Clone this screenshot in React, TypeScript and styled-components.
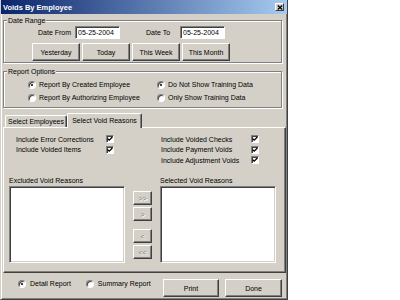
import styled, { createGlobalStyle } from "styled-components";

const GlobalStyle = createGlobalStyle`
  html, body {
    margin: 0;
    padding: 0;
    background: #ffffff;
  }
  body {
    font-family: "Liberation Sans", Arial, sans-serif;
    font-size: 7px;
    color: #000;
  }
  * {
    box-sizing: border-box;
  }
`;

function Radio({ label, checked, gap }: { label: string; checked?: boolean; gap: number }) {
  return (
    <RadioItem $gap={gap}>
      <RadioDot $checked={checked} />
      <span>{label}</span>
    </RadioItem>
  );
}

function Check({ label }: { label: string }) {
  return (
    <CheckRow>
      <span>{label}</span>
      <CheckBox>
        <svg width="6" height="6" viewBox="0 0 6 6">
          <path d="M0.6 2.6 L2.2 4.2 L5.4 1" stroke="#000" strokeWidth="1.3" fill="none" />
        </svg>
      </CheckBox>
    </CheckRow>
  );
}

export default function App() {
  return (
    <>
      <GlobalStyle />
      <Window>
        <TitleBar>
          <span>Voids By Employee</span>
          <CloseButton>
            <svg width="6" height="5" viewBox="0 0 6 5">
              <path d="M0.8 0.5 L5.2 4.5 M5.2 0.5 L0.8 4.5" stroke="#000" strokeWidth="1.3" />
            </svg>
          </CloseButton>
        </TitleBar>
        <Body>
          <Group $top={6}>
            <Legend>Date Range</Legend>
            <DateRow>
              <span>Date From</span>
              <TextBox $gap={4} readOnly value="05-25-2004" />
              <DateLabel>Date To</DateLabel>
              <TextBox $gap={10} readOnly value="05-25-2004" />
            </DateRow>
            <ButtonRow>
              <Button $w={48}>Yesterday</Button>
              <Button $w={48}>Today</Button>
              <Button $w={48}>This Week</Button>
              <Button $w={48}>This Month</Button>
            </ButtonRow>
          </Group>

          <Group $top={8}>
            <Legend>Report Options</Legend>
            <OptionGrid>
              <Radio label="Report By Created Employee" checked gap={3} />
              <Radio label="Do Not Show Training Data" checked gap={3} />
              <Radio label="Report By Authorizing Employee" gap={3} />
              <Radio label="Only Show Training Data" gap={3} />
            </OptionGrid>
          </Group>

          <TabStrip>
            <Tab $w={62}>Select Employees</Tab>
            <Tab $w={75} $active>
              Select Void Reasons
            </Tab>
          </TabStrip>
          <TabPanel>
            <CheckGrid>
              <CheckColumn>
                <Check label="Include Error Corrections" />
                <Check label="Include Voided Items" />
              </CheckColumn>
              <CheckColumn>
                <Check label="Include Voided Checks" />
                <Check label="Include Payment Voids" />
                <Check label="Include Adjustment Voids" />
              </CheckColumn>
            </CheckGrid>
            <ListsRow>
              <ListColumn>
                <ListLabel>Excluded Void Reasons</ListLabel>
                <ListBox />
              </ListColumn>
              <MoveColumn>
                <MoveButton>&gt;&gt;</MoveButton>
                <MoveButton>&gt;</MoveButton>
                <MoveButton $space={6}>&lt;</MoveButton>
                <MoveButton>&lt;&lt;</MoveButton>
              </MoveColumn>
              <ListColumn>
                <ListLabel>Selected Void Reasons</ListLabel>
                <ListBox />
              </ListColumn>
            </ListsRow>
          </TabPanel>

          <Footer>
            <Radio label="Detail Report" checked gap={4} />
            <FooterRadio>
              <Radio label="Summary Report" gap={4} />
            </FooterRadio>
            <FooterButtons>
              <Button $w={56}>Print</Button>
              <Button $w={57}>Done</Button>
            </FooterButtons>
          </Footer>
        </Body>
      </Window>
    </>
  );
}

const Window = styled.div`
  width: 288px;
  height: 300px;
  display: flex;
  flex-direction: column;
  background: #d4d0c8;
  border: 1px solid;
  border-top-width: 0;
  border-color: #d4d0c8 #404040 #404040 #d4d0c8;
  box-shadow: inset 1px 0 0 #fff, inset -1px -1px 0 #808080;
`;

const TitleBar = styled.div`
  flex: none;
  height: 14px;
  display: flex;
  align-items: center;
  justify-content: space-between;
  padding: 0 3px 0 2px;
  background: linear-gradient(to right, #0a246a, #a6caf0);
  color: #fff;
  font-weight: bold;
  font-size: 7.5px;
`;

const CloseButton = styled.span`
  width: 9px;
  height: 8px;
  display: flex;
  align-items: center;
  justify-content: center;
  background: #d4d0c8;
  border: 1px solid;
  border-color: #fff #404040 #404040 #fff;
`;

const Body = styled.div`
  flex: 1;
  display: flex;
  flex-direction: column;
  padding: 0 2px;
`;

const Group = styled.div<{ $top: number }>`
  position: relative;
  width: 279px;
  margin-top: ${(p) => p.$top}px;
  border: 1px solid #808080;
  box-shadow: inset 1px 1px 0 #fff, 1px 1px 0 #fff;
`;

const Legend = styled.span`
  position: absolute;
  top: -5px;
  left: 3px;
  padding: 0 1px;
  line-height: 9px;
  background: #d4d0c8;
`;

const DateRow = styled.div`
  display: flex;
  align-items: center;
  height: 13px;
  margin-top: 5px;
  padding-left: 34px;
`;

const DateLabel = styled.span`
  margin-left: 26px;
`;

const TextBox = styled.input<{ $gap: number }>`
  width: 45px;
  height: 13px;
  margin: 0 0 0 ${(p) => p.$gap}px;
  padding: 0 0 0 2px;
  font: inherit;
  color: #000;
  background: #fff;
  border: 1px solid;
  border-color: #808080 #fff #fff #808080;
  box-shadow: inset 1px 1px 0 #404040;
  outline: none;
`;

const ButtonRow = styled.div`
  display: flex;
  gap: 2px;
  margin: 4px 0 1px;
  padding-left: 28px;
`;

const Button = styled.button<{ $w: number }>`
  width: ${(p) => p.$w}px;
  height: 18px;
  padding: 0;
  font: inherit;
  color: #000;
  background: #d4d0c8;
  border: 1px solid;
  border-color: #fff #404040 #404040 #fff;
  box-shadow: inset -1px -1px 0 #808080;
`;

const OptionGrid = styled.div`
  display: grid;
  grid-template-columns: 129px auto;
  grid-auto-rows: 13px;
  padding: 6px 0 3px 24px;
`;

const RadioItem = styled.label<{ $gap: number }>`
  display: flex;
  align-items: center;
  gap: ${(p) => p.$gap}px;
  line-height: 9px;
  white-space: nowrap;
`;

const RadioDot = styled.span<{ $checked?: boolean }>`
  position: relative;
  flex: none;
  width: 8px;
  height: 8px;
  border-radius: 50%;
  background: #fff;
  border: 1px solid;
  border-color: #808080 #fff #fff #808080;
  box-shadow: inset 1px 1px 0 #404040;
  &::after {
    content: "";
    display: ${(p) => (p.$checked ? "block" : "none")};
    position: absolute;
    left: 2px;
    top: 2px;
    width: 2px;
    height: 2px;
    border-radius: 50%;
    background: #000;
  }
`;

const TabStrip = styled.div`
  display: flex;
  align-items: flex-end;
  height: 14px;
  margin-top: 5px;
  padding-left: 2px;
`;

const Tab = styled.div<{ $w: number; $active?: boolean }>`
  position: relative;
  z-index: ${(p) => (p.$active ? 1 : 0)};
  width: ${(p) => p.$w}px;
  height: ${(p) => (p.$active ? 15 : 12)}px;
  margin-bottom: ${(p) => (p.$active ? -1 : 0)}px;
  padding-top: ${(p) => (p.$active ? 2 : 1)}px;
  text-align: center;
  line-height: 9px;
  background: #d4d0c8;
  border: 1px solid;
  border-bottom: none;
  border-color: #fff #404040 #fff #fff;
  border-radius: 2px 2px 0 0;
  box-shadow: inset -1px 0 0 #808080;
`;

const TabPanel = styled.div`
  width: 283px;
  height: 146px;
  padding: 6px 0 0 5px;
  border: 1px solid;
  border-color: #fff #404040 #404040 #fff;
  box-shadow: inset -1px -1px 0 #808080;
`;

const CheckGrid = styled.div`
  display: grid;
  grid-template-columns: 145px 145px;
  padding-left: 7px;
`;

const CheckColumn = styled.div`
  display: flex;
  flex-direction: column;
`;

const CheckRow = styled.div`
  display: grid;
  grid-template-columns: 90px 8px;
  align-items: center;
  height: 10.5px;
  white-space: nowrap;
`;

const CheckBox = styled.span`
  width: 8px;
  height: 8px;
  display: flex;
  align-items: center;
  justify-content: center;
  background: #fff;
  border: 1px solid;
  border-color: #808080 #fff #fff #808080;
  box-shadow: inset 1px 1px 0 #404040;
`;

const ListsRow = styled.div`
  display: grid;
  grid-template-columns: 116px 19px 116px;
  column-gap: 8px;
  margin-top: 10.5px;
`;

const ListColumn = styled.div`
  display: flex;
  flex-direction: column;
`;

const ListLabel = styled.span`
  line-height: 9px;
  margin-bottom: 1px;
  white-space: nowrap;
`;

const ListBox = styled.div`
  height: 77px;
  background: #fff;
  border: 1px solid;
  border-color: #808080 #fff #fff #808080;
  box-shadow: inset 1px 1px 0 #404040, inset -1px -1px 0 #d4d0c8;
`;

const MoveColumn = styled.div`
  display: flex;
  flex-direction: column;
  gap: 2px;
  padding-top: 15px;
`;

const MoveButton = styled.button<{ $space?: number }>`
  width: 19px;
  height: 14px;
  margin-top: ${(p) => p.$space ?? 0}px;
  padding: 0;
  font: inherit;
  color: #808080;
  text-shadow: 1px 1px 0 #fff;
  background: #d4d0c8;
  border: 1px solid;
  border-color: #fff #404040 #404040 #fff;
  box-shadow: inset -1px -1px 0 #808080;
`;

const Footer = styled.div`
  display: flex;
  align-items: flex-start;
  height: 18px;
  margin-top: 6px;
  padding-left: 15px;
`;

const FooterRadio = styled.div`
  margin-left: 15px;
`;

const FooterButtons = styled.div`
  display: flex;
  gap: 6px;
  margin: 0 3px 0 auto;
`;
